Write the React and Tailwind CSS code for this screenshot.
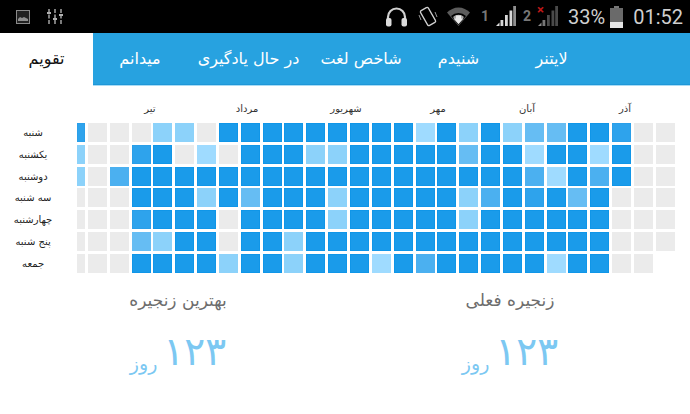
const A = "font-['DejaVu_Sans',sans-serif]";
const fill = {
  e: "bg-[#ebebeb]",
  4: "bg-[#1a9bea] border border-[#1096e8]",
  3: "bg-[#2ea3ec] border border-[#2a9fe9]",
  5: "bg-[#4bb0f0]",
  2: "bg-[#66bdf3]",
  1: "bg-[#8cd2fa]",
  0: "bg-[#9fdbff]",
};
const cols = ["3 1 1 e e e e","e e e e e e e","e e 5 e e e e","e 3 4 4 3 2 4","1 4 4 4 4 1 4","1 e 4 4 4 4 4","e 0 4 1 4 4 4","4 e 4 4 e e 1","4 4 4 2 4 4 4","4 4 4 4 4 4 4","4 4 4 4 4 1 1","4 1 4 4 4 4 4","4 1 4 1 1 4 4","4 4 4 4 4 4 4","4 4 4 4 4 4 0","4 4 4 4 4 4 4","0 4 4 4 4 4 5","4 4 4 4 4 4 4","1 2 4 1 1 4 4","4 4 4 5 4 4 4","1 4 4 4 4 4 4","2 0 5 3 4 4 4","2 4 0 4 4 4 0","4 4 4 2 4 4 4","4 0 5 4 4 4 4","3 4 4 e e e e","e e e e e e e","e e e e e e -"].map(c => c.split(" "));
const days = ["شنبه","یکشنبه","دوشنبه","سه شنبه","چهارشنبه","پنج شنبه","جمعه"];
const months = [["تیر","w-[100px]"],["مرداد","w-[94px]"],["شهریور","w-[104px]"],["مهر","w-[80px]"],["آبان","w-[98px]"],["آذر","w-[98px]"]];
const tabs = [["میدانم","w-[94px]"],["در حال یادگیری","w-[123px]"],["شاخص لغت","w-[102px]"],["شنیدم","w-[93px]"],["لایتنر","w-[93px]"]];

function Signal({ on }) {
  return (
    <svg width="20" height="21" viewBox="0 0 20 21" className="mt-[-2px]">
      <path d="M0 21 3.500 17.500V21z" fill={on ? "#e0e0e0" : "#8a8a8a"} />
      {[[4.5,15,6],[9,10,11],[13.5,5.500,15.500],[17.2,1,20]].map(([x,y,h],i)=>(
        <rect key={i} x={x} y={y} width="2.800" height={h} fill={on ? (i===3?"#8f8f8f":"#d8d8d8") : (i<1?"#777":"#4a4a4a")} />
      ))}
    </svg>
  );
}

function StatusBar() {
  return (
    <div className="h-[33px] bg-black flex items-center pl-[16px] pr-[7px] font-['Roboto',sans-serif] text-[#cfcfcf]">
      <svg width="14" height="14" viewBox="0 0 14 14" className="mr-[17px]">
        <rect x="0.5" y="0.5" width="13" height="13" fill="#222" stroke="#8a8a8a" />
        <path d="M2 11V9l2-2 2 1 2-1 2 1 2 1v2z" fill="#8f8f8f" />
      </svg>
      <svg width="16" height="15" viewBox="0 0 16 15" className="mr-auto" stroke="#b0b0b0" strokeWidth="1.400">
        <path d="M2 0v15M8 0v15M14 0v15" strokeDasharray="4 1.500" />
        <path d="M0 4h4M6 10h4M12 6h4" strokeWidth="2" />
      </svg>
      <svg width="23" height="21" viewBox="0 0 23 21" className="mr-[10px]">
        <path d="M3 13V11a8.500 8.500 0 0 1 17 0v2" fill="none" stroke="#d0d0d0" strokeWidth="2.200" />
        <rect x="1" y="12" width="5.500" height="8.500" rx="2" fill="#dcdcdc" />
        <rect x="16.500" y="12" width="5.500" height="8.500" rx="2" fill="#dcdcdc" />
      </svg>
      <svg width="20" height="23" viewBox="0 0 20 23" className="mr-[8px]">
        <rect x="5.500" y="3" width="9" height="17" rx="1.500" transform="rotate(-30 10 11.500)" fill="none" stroke="#d0d0d0" strokeWidth="1.300" />
        <path d="M1 10 3 15M17 7l2 5" stroke="#999" strokeWidth="1" />
      </svg>
      <svg width="25" height="20" viewBox="0 0 25 20" className="mr-[10px]">
        <path d="M1 5.500a16 16 0 0 1 23 0L12.500 19z" fill="#5c5c5c" />
        <path d="M5 9a11 11 0 0 1 15 0L12.500 18z" fill="#000" />
        <path d="M7 10a8 8 0 0 1 11 0l-5.500 7z" fill="#a8a8a8" />
        <path d="M10 8.500h5v3h2.500L12.500 17 7.500 11.500H10z" fill="#e8e8e8" />
      </svg>
      <span className="text-[14px] font-bold text-[#777] w-[15px]">1</span>
      <Signal on />
      <span className="text-[14px] font-bold text-[#777] w-[22px] text-center">2</span>
      <div className="relative">
        <Signal />
        <span className="absolute left-[-1px] top-[-4px] text-[13px] font-bold leading-none text-[#c01818]">×</span>
      </div>
      <span className="text-[20px] ml-[10px] mr-[5px]">33%</span>
      <svg width="13" height="22" viewBox="0 0 13 22" className="mr-[10px]">
        <rect x="4" y="0" width="5" height="2" fill="#777" />
        <rect x="0" y="2" width="13" height="20" fill="#6a6a6a" />
        <rect x="0" y="16" width="13" height="6" fill="#e5e5e5" />
      </svg>
      <span className="text-[20px]">01:52</span>
    </div>
  );
}

function Stat({ title, cls }) {
  return (
    <div className={`${cls} flex flex-col items-center`}>
      <div className="text-[17px] leading-[20px] text-[#6d6d6d]">{title}</div>
      <div className="flex items-end gap-[6px] mt-[20px] text-[#7cc8f2]">
        <span className="text-[19px] leading-[26px] mb-[-2px]">روز</span>
        <span className="text-[39px] leading-[44px]">۱۲۳</span>
      </div>
    </div>
  );
}

export default function App() {
  return (
    <div className={`w-[690px] h-[414px] bg-white overflow-hidden ${A}`}>
      <StatusBar />
      <div className="flex h-[52px]">
        <div className="w-[93px] flex items-center justify-center text-[16px] text-[#111]">تقویم</div>
        <div className="flex-1 flex bg-[#27a2e0] border-b border-[#1f97d8] shadow-[0_1px_0_#a9dcf5]">
          {tabs.map(([t, w]) => (
            <div key={t} className={`${w} flex items-center justify-center text-[16px] text-white whitespace-nowrap`}>{t}</div>
          ))}
        </div>
      </div>
      <div className="flex pl-[100px] mt-[16px] h-[14px] items-center text-[10px] text-[#333]">
        {months.map(([m, w]) => <div key={m} className={`${w} text-center`}>{m}</div>)}
      </div>
      <div className="grid grid-cols-[74.2px_8px_repeat(27,19px)] gap-x-[2.850px] gap-y-[2.750px] mt-[8px] grid-rows-[repeat(7,19px)]">
        {days.map((d, r) => (
          <div key={d} className="col-start-1 text-[10px] text-[#222] text-center pr-[8px] leading-[19px] whitespace-nowrap" style={{ gridRow: r + 1 }}>{d}</div>
        ))}
        {cols.map((c, ci) => c.map((v, r) => v === "-" ? null : (
          <div key={ci + "-" + r} className={fill[v]} style={{ gridColumn: ci + 2, gridRow: r + 1 }} />
        )))}
      </div>
      <div className="flex mt-[17px]">
        <Stat title="بهترین زنجیره" cls="w-[356px]" />
        <Stat title="زنجیره فعلی" cls="w-[308px]" />
      </div>
    </div>
  );
}
